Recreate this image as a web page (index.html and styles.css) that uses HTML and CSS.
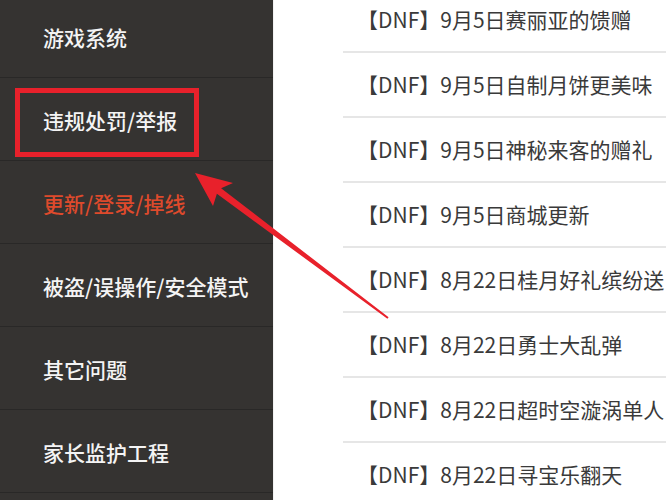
FILE: index.html
```html
<!DOCTYPE html>
<html lang="zh-CN">
<head>
<meta charset="utf-8">
<title>DNF</title>
<link rel="stylesheet" href="styles.css">
</head>
<body>
<div class="page">
  <nav class="sidebar">
    <div class="nav-item">游戏系统</div>
    <div class="nav-item">违规处罚/举报</div>
    <div class="nav-item active">更新/登录/掉线</div>
    <div class="nav-item">被盗/误操作/安全模式</div>
    <div class="nav-item">其它问题</div>
    <div class="nav-item">家长监护工程</div>
  </nav>
  <main class="content">
    <ul class="news">
      <li>【DNF】9月5日赛丽亚的馈赠</li>
      <li>【DNF】9月5日自制月饼更美味</li>
      <li>【DNF】9月5日神秘来客的赠礼</li>
      <li>【DNF】9月5日商城更新</li>
      <li>【DNF】8月22日桂月好礼缤纷送</li>
      <li>【DNF】8月22日勇士大乱弹</li>
      <li>【DNF】8月22日超时空漩涡单人</li>
      <li>【DNF】8月22日寻宝乐翻天</li>
    </ul>
  </main>
</div>
<div class="highlight-box"></div>
<svg class="arrow" width="666" height="500" viewBox="0 0 666 500">
  <polygon points="195,173 233,183 221.1,188.2 388.6,317.2 387.4,318.8 216.9,193.8 213,206" fill="#e8212b"/>
</svg>
</body>
</html>
```
FILE: styles.css
```css
html, body {
  margin: 0;
  padding: 0;
  background: #ffffff;
  overflow: hidden;
}
body {
  width: 666px;
  height: 500px;
  position: relative;
  font-family: "Noto Sans CJK SC", "Noto Sans", sans-serif;
}
.page {
  display: flex;
  height: 500px;
}
.sidebar {
  width: 273px;
  flex: none;
  background: #353331;
  margin-top: -5px;
  border-right: 1px solid #f2f2f2;
  box-sizing: content-box;
}
.nav-item {
  border-bottom: 1px solid #292827;
  display: flex;
  align-items: center;
  padding-left: 43px;
  padding-top: 2px;
  box-sizing: border-box;
  height: 83px;
  color: #f4f4f4;
  font-size: 21px;
  font-weight: 500;
  line-height: 1;
}
.nav-item.active {
  color: #de4a2c;
}
.content {
  flex: 1;
  padding-left: 69px;
  overflow: hidden;
}
.news {
  list-style: none;
  margin: -12px 0 0 0;
  padding: 0;
}
.news li {
  height: 63px;
  border-bottom: 2px solid #e6e6e6;
  display: flex;
  align-items: center;
  padding-left: 14px;
  color: #3a3a3a;
  font-size: 21px;
  white-space: nowrap;
  line-height: 1;
}
.highlight-box {
  position: absolute;
  left: 15px;
  top: 88px;
  width: 184px;
  height: 69px;
  border: 5px solid #e8212b;
  box-sizing: border-box;
}
.arrow {
  position: absolute;
  left: 0;
  top: 0;
  pointer-events: none;
}
```
